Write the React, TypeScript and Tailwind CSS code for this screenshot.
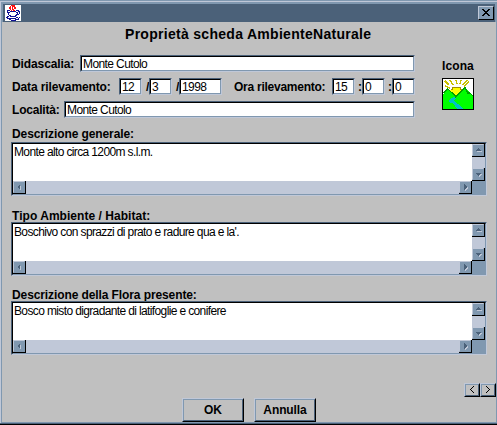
import type { ReactNode } from 'react';

const inset =
  'border border-t-[#4b6179] border-l-[#4b6179] border-r-[#c0c8d8] border-b-[#c0c8d8]';
const insetInner =
  'h-full border border-t-black border-l-black border-r-[#8098b0] border-b-[#8098b0] bg-white';

function Field({ width, value }: { width: string; value: string }) {
  return (
    <div className={`h-[17px] shrink-0 ${width} ${inset}`}>
      <div className={`${insetInner} overflow-hidden pl-px text-[12px] leading-[14px] tracking-[-0.6px] whitespace-nowrap`}>
        {value}
      </div>
    </div>
  );
}

function Label({ children, className = '' }: { children: ReactNode; className?: string }) {
  return <div className={`shrink-0 text-[12px] font-bold whitespace-nowrap ${className}`}>{children}</div>;
}

const arrows = {
  left: 'M6 2v6L3 5z',
  right: 'M4 2v6l3-3z',
  up: 'M2 6h6L5 3z',
  down: 'M2 4h6L5 7z',
};

function ArrowButton({ dir }: { dir: keyof typeof arrows }) {
  return (
    <div className="h-[13px] w-[13px] shrink-0 border-r border-b border-black bg-[#8098b0]">
      <div className="h-3 w-3 border border-t-[#c0c8d8] border-l-[#c0c8d8] border-r-[#8098b0] border-b-[#8098b0]">
        <svg width="10" height="10" viewBox="0 0 10 10" shapeRendering="crispEdges">
          <path d={arrows[dir]} fill="#c0c8d8" transform="translate(1 1)" />
          <path d={arrows[dir]} fill="#4b6179" />
        </svg>
      </div>
    </div>
  );
}

function TextBox({ value }: { value: string }) {
  return (
    <div className={`h-[54px] w-[476px] shrink-0 ${inset}`}>
      <div className={`${insetInner} flex flex-col`}>
        <div className="flex h-[37px]">
          <div className="flex-1 pl-px text-[12px] leading-[17px] tracking-[-0.63px] whitespace-nowrap">{value}</div>
          <div className="flex w-[13px] flex-col justify-between bg-[#c0c8d8]">
            <ArrowButton dir="up" />
            <ArrowButton dir="down" />
          </div>
        </div>
        <div className="flex h-[13px]">
          <div className="flex flex-1 justify-between bg-[#c0c8d8]">
            <ArrowButton dir="left" />
            <ArrowButton dir="right" />
          </div>
          <div className="w-[13px] bg-[#8098b0]" />
        </div>
      </div>
    </div>
  );
}

function Button({ children, className }: { children: ReactNode; className: string }) {
  return (
    <div className={`border border-t-[#c0c8d8] border-l-[#c0c8d8] border-r-black border-b-black ${className}`}>
      <div className="flex h-full items-center justify-center border border-t-[#8098b0] border-l-[#8098b0] border-r-[#4b6179] border-b-[#4b6179]">
        {children}
      </div>
    </div>
  );
}

function JavaCup() {
  return (
    <svg className="block bg-white" width="16" height="16" viewBox="0 0 16 16" shapeRendering="crispEdges">
      <path d="M6 .5h4M5 1.5h1M7 1.5h3M4 2.5h2M7 2.5h1M9 2.5h2M4 3.5h2M7 3.5h1M9 3.5h2M5 4.5h1M7 4.5h2M6 5.5h1M8 5.5h2" stroke="#ff1010" />
      <path d="M2 5.5h3M11 5.5h3M2 6.5h1M5 6.5h6M13 6.5h2M2 7.5h3M11 7.5h2M14 7.5h1M3 8.5h1M12 8.5h1M14 8.5h1M3 9.5h1M11 9.5h3M4 10.5h2M10 10.5h2M2 11.5h2M5 11.5h6M1 12.5h2M11 12.5h2M14 12.5h1M2 13.5h9M13 13.5h1M4 14.5h2M10 14.5h4M6 15.5h5" stroke="#101094" />
    </svg>
  );
}

function Landscape() {
  return (
    <svg className="block" width="32" height="32" viewBox="0 0 32 32" shapeRendering="crispEdges">
      <path d="M0 0h32v32H0z" fill="#fff" />
      <path d="M3 3l4 4M8 2l3 5M14 2l1 4M19 2l-1 4M25 2l-4 5M27 4l-5 4M3 8l5 2" stroke="#c8c000" strokeWidth="1.5" fill="none" />
      <path d="M8 13l2-3h9l2 3-6 5z" fill="#ff0" />
      <path d="M9 11.5h1l1-2h7l1 2h1" stroke="#a09000" strokeWidth="1.4" fill="none" />
      <path d="M1 16l5-5 9 7 8-8 8 8v13H1z" fill="#0f0" />
      <path d="M1 15l5-4 3 3 5 4 9-8 3 5h2l3 3M15 18l-3 2" stroke="#00a000" strokeWidth="1.4" fill="none" />
      <path d="M12 19l-4 2-1 3 5 2 3 5h6l-3-4-5-3-1-2 2-2z" fill="#00c0c8" />
      <path d="M.5 .5h31v31H.5z" fill="none" stroke="#000" />
    </svg>
  );
}

export default function App() {
  return (
    <div className="h-[425px] w-[497px] overflow-hidden border-b border-black bg-[#8098b0] font-['Liberation_Sans',Arial,sans-serif] text-black">
      <div className="h-[424px] border-b border-[#4b6179] pt-px">
        <div className="h-[422px] border-t border-l border-[#c0c8d8] pt-0.5 pr-px pb-px pl-px">
          <div className="mr-px ml-px flex h-[18px] items-center justify-between bg-[#4b6179] pr-px pl-0.5">
            <JavaCup />
            <div className="h-[14px] w-4 border border-t-[#c0c8d8] border-l-[#c0c8d8] border-r-black border-b-black bg-[#8098b0]">
              <svg className="block" width="14" height="12" viewBox="0 0 14 12" shapeRendering="crispEdges">
                <path d="M3 2.5h2M9 2.5h2M4 3.5h2M8 3.5h2M5 4.5h4M6 5.5h2M5 6.5h4M4 7.5h2M8 7.5h2M3 8.5h2M9 8.5h2" stroke="#000" />
              </svg>
            </div>
          </div>
          <div className="flex h-[400px] flex-col bg-[#c0c0c0] pl-[9px]">
            <h1 className="mt-[3px] h-[30px] pl-[114px] text-[14px] leading-[18px] font-bold tracking-[0.29px] whitespace-nowrap">
              Proprietà scheda AmbienteNaturale
            </h1>
            <div className="flex h-[71px]">
              <div className="flex w-[404px] flex-col gap-1.5 leading-[19px]">
                <div className="flex h-[17px]">
                  <Label className="w-[69px] pl-px tracking-[-0.1px]">Didascalia:</Label>
                  <Field width="w-[335px]" value="Monte Cutolo" />
                </div>
                <div className="flex h-[17px]">
                  <Label className="w-[108px] pl-px tracking-[-0.12px]">Data rilevamento:</Label>
                  <Field width="w-[23px]" value="12" />
                  <Label className="w-[7px] pl-1">/</Label>
                  <Field width="w-[23px]" value="3" />
                  <Label className="w-[7px] pl-1">/</Label>
                  <Field width="w-[43px]" value="1998" />
                  <Label className="w-[110px] pl-3 tracking-[-0.25px]">Ora rilevamento:</Label>
                  <Field width="w-[23px]" value="15" />
                  <Label className="w-[7px] pl-[3px]">:</Label>
                  <Field width="w-[23px]" value="0" />
                  <Label className="w-[7px] pl-[3px]">:</Label>
                  <Field width="w-[23px]" value="0" />
                </div>
                <div className="flex h-[17px]">
                  <Label className="w-[53px] pl-px tracking-[-0.2px]">Località:</Label>
                  <Field width="w-[351px]" value="Monte Cutolo" />
                </div>
              </div>
              <div className="ml-[27px] pt-0.5">
                <Label className="h-[21px] leading-[19px] tracking-[0.1px]">Icona</Label>
                <Landscape />
              </div>
            </div>
            <Label className="h-4 pl-px leading-[17px] tracking-[-0.1px]">Descrizione generale:</Label>
            <TextBox value="Monte alto circa 1200m s.l.m." />
            <Label className="mt-3 h-[14px] overflow-hidden pl-px leading-[17px] tracking-[0.04px]">Tipo Ambiente / Habitat:</Label>
            <TextBox value="Boschivo con sprazzi di prato e radure qua e la'." />
            <Label className="mt-[11px] h-[14px] overflow-hidden pl-px leading-[17px] tracking-[-0.1px]">Descrizione della Flora presente:</Label>
            <TextBox value="Bosco misto digradante di latifoglie e conifere" />
            <div className="mt-7 flex h-[14px] shrink-0 justify-end">
              <Button className="h-[14px] w-4">
                <svg width="12" height="10" viewBox="0 0 12 10" shapeRendering="crispEdges"><path d="M7 1.5h1M6 2.5h1M5 3.5h1M4 4.5h1M5 5.5h1M6 6.5h1M7 7.5h1" stroke="#000" /></svg>
              </Button>
              <Button className="h-[14px] w-4">
                <svg width="12" height="10" viewBox="0 0 12 10" shapeRendering="crispEdges"><path d="M4 1.5h1M5 2.5h1M6 3.5h1M7 4.5h1M6 5.5h1M5 6.5h1M4 7.5h1" stroke="#000" /></svg>
              </Button>
            </div>
            <div className="mt-px flex gap-[10px] pl-[171px]">
              <Button className="h-6 w-[62px]"><Label className="leading-[17px]">OK</Label></Button>
              <Button className="h-6 w-[62px]"><Label className="leading-[17px] tracking-[-0.1px]">Annulla</Label></Button>
            </div>
          </div>
        </div>
      </div>
    </div>
  );
}
